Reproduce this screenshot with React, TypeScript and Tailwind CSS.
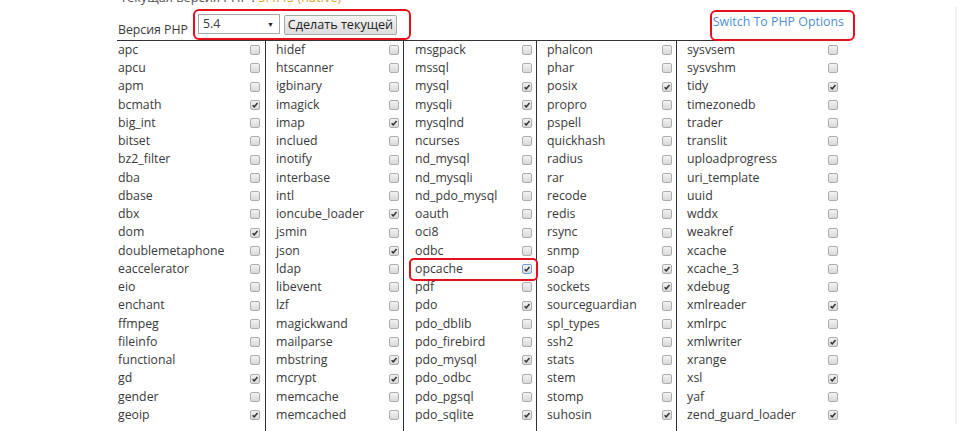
const columns: { name: string; on?: boolean; focus?: boolean }[][] = [
  [
    { name: "apc" },
    { name: "apcu" },
    { name: "apm" },
    { name: "bcmath", on: true },
    { name: "big_int" },
    { name: "bitset" },
    { name: "bz2_filter" },
    { name: "dba" },
    { name: "dbase" },
    { name: "dbx" },
    { name: "dom", on: true },
    { name: "doublemetaphone" },
    { name: "eaccelerator" },
    { name: "eio" },
    { name: "enchant" },
    { name: "ffmpeg" },
    { name: "fileinfo" },
    { name: "functional" },
    { name: "gd", on: true },
    { name: "gender" },
    { name: "geoip", on: true },
  ],
  [
    { name: "hidef" },
    { name: "htscanner" },
    { name: "igbinary" },
    { name: "imagick" },
    { name: "imap", on: true },
    { name: "inclued" },
    { name: "inotify" },
    { name: "interbase" },
    { name: "intl" },
    { name: "ioncube_loader", on: true },
    { name: "jsmin" },
    { name: "json", on: true },
    { name: "ldap" },
    { name: "libevent" },
    { name: "lzf" },
    { name: "magickwand" },
    { name: "mailparse" },
    { name: "mbstring", on: true },
    { name: "mcrypt", on: true },
    { name: "memcache" },
    { name: "memcached" },
  ],
  [
    { name: "msgpack" },
    { name: "mssql" },
    { name: "mysql", on: true },
    { name: "mysqli", on: true },
    { name: "mysqlnd", on: true },
    { name: "ncurses" },
    { name: "nd_mysql" },
    { name: "nd_mysqli" },
    { name: "nd_pdo_mysql" },
    { name: "oauth" },
    { name: "oci8" },
    { name: "odbc" },
    { name: "opcache", on: true, focus: true },
    { name: "pdf" },
    { name: "pdo", on: true },
    { name: "pdo_dblib" },
    { name: "pdo_firebird" },
    { name: "pdo_mysql", on: true },
    { name: "pdo_odbc" },
    { name: "pdo_pgsql" },
    { name: "pdo_sqlite", on: true },
  ],
  [
    { name: "phalcon" },
    { name: "phar" },
    { name: "posix", on: true },
    { name: "propro" },
    { name: "pspell" },
    { name: "quickhash" },
    { name: "radius" },
    { name: "rar" },
    { name: "recode" },
    { name: "redis" },
    { name: "rsync" },
    { name: "snmp" },
    { name: "soap", on: true },
    { name: "sockets", on: true },
    { name: "sourceguardian" },
    { name: "spl_types" },
    { name: "ssh2" },
    { name: "stats" },
    { name: "stem" },
    { name: "stomp" },
    { name: "suhosin", on: true },
  ],
  [
    { name: "sysvsem" },
    { name: "sysvshm" },
    { name: "tidy", on: true },
    { name: "timezonedb" },
    { name: "trader" },
    { name: "translit" },
    { name: "uploadprogress" },
    { name: "uri_template" },
    { name: "uuid" },
    { name: "wddx" },
    { name: "weakref" },
    { name: "xcache" },
    { name: "xcache_3" },
    { name: "xdebug" },
    { name: "xmlreader", on: true },
    { name: "xmlrpc" },
    { name: "xmlwriter", on: true },
    { name: "xrange" },
    { name: "xsl", on: true },
    { name: "yaf" },
    { name: "zend_guard_loader", on: true },
  ],
];

const colClasses = [
  "w-[149px] border-r border-[#333] pl-[1px] pr-[5px]",
  "w-[138px] border-r border-[#333] pl-[10px] pr-[4px]",
  "w-[133px] border-r border-[#333] pl-[11px] pr-[4px]",
  "w-[140px] border-r border-[#333] pl-[10px] pr-[4px]",
  "w-[168px] pl-[10px] pr-[7px]",
];

function Checkbox({ on, focus }: { on?: boolean; focus?: boolean }) {
  return (
    <span
      className={
        "flex h-[10px] w-[10px] items-center justify-center rounded-[2px] border bg-gradient-to-b from-[#f2f2f2] to-[#d9d9d9] " +
        (focus ? "border-[#6e9fd8]" : "border-[#adadad]")
      }
    >
      {on && (
        <svg width="8" height="8" viewBox="0 0 8 8">
          <path d="M1.6 4.3 L3.2 5.9 L6.5 1.9" fill="none" stroke="#333" strokeWidth="1.5" />
        </svg>
      )}
    </span>
  );
}

export default function App() {
  return (
    <div
      className="relative flex h-[431px] w-[963px] overflow-hidden bg-white text-[12.3px] text-[#3a3a3a]"
      style={{ fontFamily: '"Open Sans", "Noto Sans", sans-serif' }}
    >
      <div className="flex-1">
        <div className="ml-[117px] -mt-[12px] w-[728px]">
          {/* current version, cut off at the top */}
          <div className="h-[18px] pl-[3px] text-[12.8px] leading-[18px] text-[#555]">
            Текущая версия PHP :{" "}
            <span className="text-[#f0a030]">5.4.45 (native)</span>
          </div>

          {/* version picker */}
          <div className="flex h-[34px] items-start">
            <span className="mt-[15px] ml-[1px] w-[80px] leading-[18px]">Версия PHP</span>
            <div className="mt-[8px] flex h-[20px] w-[82px] items-center justify-between border border-[#a9a9a9] bg-white pl-[4px] pr-[5px] leading-none">
              <span>5.4</span>
              <span className="text-[7px] text-[#222]">▼</span>
            </div>
            <button className="mt-[9px] ml-[4px] flex h-[20px] w-[113px] items-center justify-center rounded-[2px] border border-[#a9a9a9] bg-gradient-to-b from-[#f5f5f5] to-[#dcdcdc] text-[12.6px] leading-none text-[#222]">
              Сделать текущей
            </button>
            <a className="ml-auto mt-[7px] pr-[1px] text-[12.4px] leading-[18px] text-[#4a8fd6]">
              Switch To PHP Options
            </a>
          </div>

          {/* extensions table */}
          <div className="flex border-t border-[#333]">
            {columns.map((col, i) => (
              <div key={i} className={"flex flex-col pb-[12px] " + colClasses[i]}>
                {col.map((ext) => (
                  <div key={ext.name} className="flex h-[18.25px] items-center justify-between leading-none">
                    <span>{ext.name}</span>
                    <Checkbox on={ext.on} focus={ext.focus} />
                  </div>
                ))}
              </div>
            ))}
          </div>
        </div>
      </div>
      <div className="my-[7px] w-[2px] bg-[#f0f0f0]" />
      <div className="w-[6px]" />

      {/* red annotation frames */}
      <div className="pointer-events-none absolute left-[193px] top-[9px] h-[31px] w-[218px] rounded-[6px] border-2 border-[#e5101c]" />
      <div className="pointer-events-none absolute left-[710px] top-[10px] h-[31px] w-[145px] rounded-[6px] border-2 border-[#e5101c]" />
      <div className="pointer-events-none absolute left-[409px] top-[258px] h-[23px] w-[129px] rounded-[5px] border-2 border-[#e5101c]" />
    </div>
  );
}
